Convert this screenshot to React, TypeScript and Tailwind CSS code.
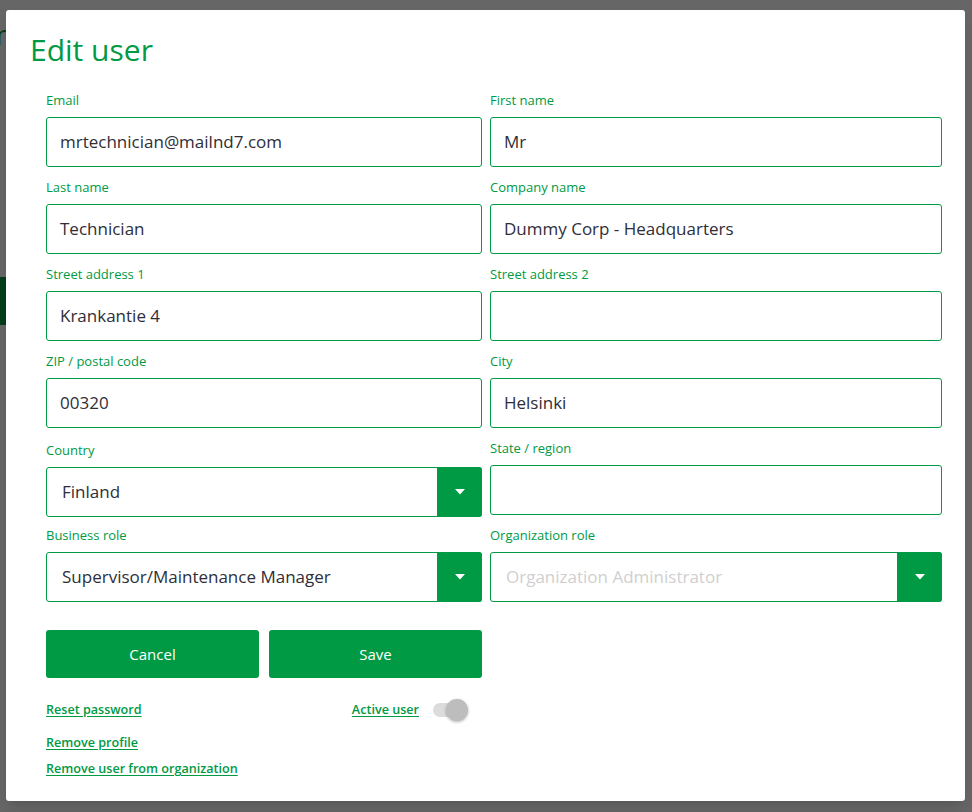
import { useState } from "react";

type Field = {
  label: string;
  value: string;
  select?: boolean;
  placeholder?: string;
  shift?: boolean;
};

const fields: Field[] = [
  { label: "Email", value: "mrtechnician@mailnd7.com" },
  { label: "First name", value: "Mr" },
  { label: "Last name", value: "Technician" },
  { label: "Company name", value: "Dummy Corp - Headquarters" },
  { label: "Street address 1", value: "Krankantie 4" },
  { label: "Street address 2", value: "" },
  { label: "ZIP / postal code", value: "00320" },
  { label: "City", value: "Helsinki" },
  { label: "Country", value: "Finland", select: true, shift: true },
  { label: "State / region", value: "" },
  { label: "Business role", value: "Supervisor/Maintenance Manager", select: true },
  { label: "Organization role", value: "", placeholder: "Organization Administrator", select: true },
];

export default function App() {
  const [active, setActive] = useState(true);

  return (
    <div
      className="relative h-[812px] w-[972px] overflow-hidden bg-white"
      style={{ fontFamily: '"Open Sans", "Liberation Sans", sans-serif' }}
    >
      {/* page behind the dialog */}
      <div className="absolute inset-0 pt-[14px]">
        <p className="-ml-[14px] text-[28px] leading-[40px] text-[#009a44]">m</p>
        <div className="-ml-[18px] mt-[145px] text-[11px] leading-[12px] text-[#009a44]">
          <p>to</p>
          <p>is</p>
          <p>ut</p>
        </div>
        <div className="mt-[42px] h-[48px] w-[40px] bg-[#009a44]" />
      </div>
      <div className="absolute inset-0 bg-black/60" />

      <div className="absolute left-[6px] top-[10px] h-[791px] w-[959px] rounded-[3px] bg-white pl-[24px] pr-[23px] pt-[20px] shadow-lg">
        <h1 className="text-[30px] leading-[40px] text-[#009a44]">Edit user</h1>

        <div className="mt-[22px] pl-[16px]">
          <div className="grid grid-cols-[436px_452px] gap-x-2 gap-y-3">
            {fields.map((field) => (
              <FormField field={field} key={field.label} />
            ))}
          </div>

          <div className="mt-[28px] flex w-[436px] gap-[10px]">
            <button
              className="flex h-[48px] flex-1 items-center justify-center rounded-[3px] bg-[#009a44] text-[15px] text-white"
              type="button"
            >
              Cancel
            </button>
            <button
              className="flex h-[48px] flex-1 items-center justify-center rounded-[3px] bg-[#009a44] text-[15px] text-white"
              type="button"
            >
              Save
            </button>
          </div>

          <div className="mt-[21px] flex w-[436px] items-center">
            <LinkText>Reset password</LinkText>
            <div className="ml-auto mr-[14px] flex items-center gap-[14px]">
              <LinkText>Active user</LinkText>
              <button
                className="relative h-[22px] w-[35px]"
                onClick={() => setActive(!active)}
                type="button"
              >
                <span className="absolute left-0 top-[4px] h-[14px] w-[32px] rounded-full bg-[#dcdcdc]" />
                <span
                  className={`absolute top-0 h-[22px] w-[22px] rounded-full bg-[#bdbdbd] shadow-[0_1px_3px_rgba(0,0,0,0.3)] ${
                    active ? "left-[13px]" : "left-0"
                  }`}
                />
              </button>
            </div>
          </div>
          <div className="mt-[8px]">
            <LinkText>Remove profile</LinkText>
          </div>
          <div className="mt-[2px]">
            <LinkText>Remove user from organization</LinkText>
          </div>
        </div>
      </div>
    </div>
  );
}

function FormField({ field }: { field: Field }) {
  return (
    <div className={field.shift ? "-mb-[2px] mt-[2px]" : ""}>
      <label className="block text-[13px] leading-[16px] text-[#009a44]">{field.label}</label>
      <div className="mt-[9px] flex h-[50px] rounded-[3px] border border-[#009a44] bg-white">
        <div
          className={`flex flex-1 items-center text-[17px] ${field.select ? "pl-[15px]" : "pl-[13px]"} ${
            field.value ? "text-[#2e2e38]" : "text-[#cfcfcf]"
          }`}
        >
          {field.value || field.placeholder}
        </div>
        {field.select ? (
          <div className="-my-px -mr-px flex w-[45px] items-center justify-center rounded-r-[3px] bg-[#009a44]">
            <svg aria-hidden height="6" viewBox="0 0 10 6" width="10">
              <path d="M0 0h10L5 5.5z" fill="#fff" />
            </svg>
          </div>
        ) : null}
      </div>
    </div>
  );
}

function LinkText({ children }: { children: string }) {
  return (
    <a
      className="cursor-pointer text-[12.6px] font-semibold leading-[18px] text-[#009a44] underline underline-offset-2"
      href="#"
    >
      {children}
    </a>
  );
}
